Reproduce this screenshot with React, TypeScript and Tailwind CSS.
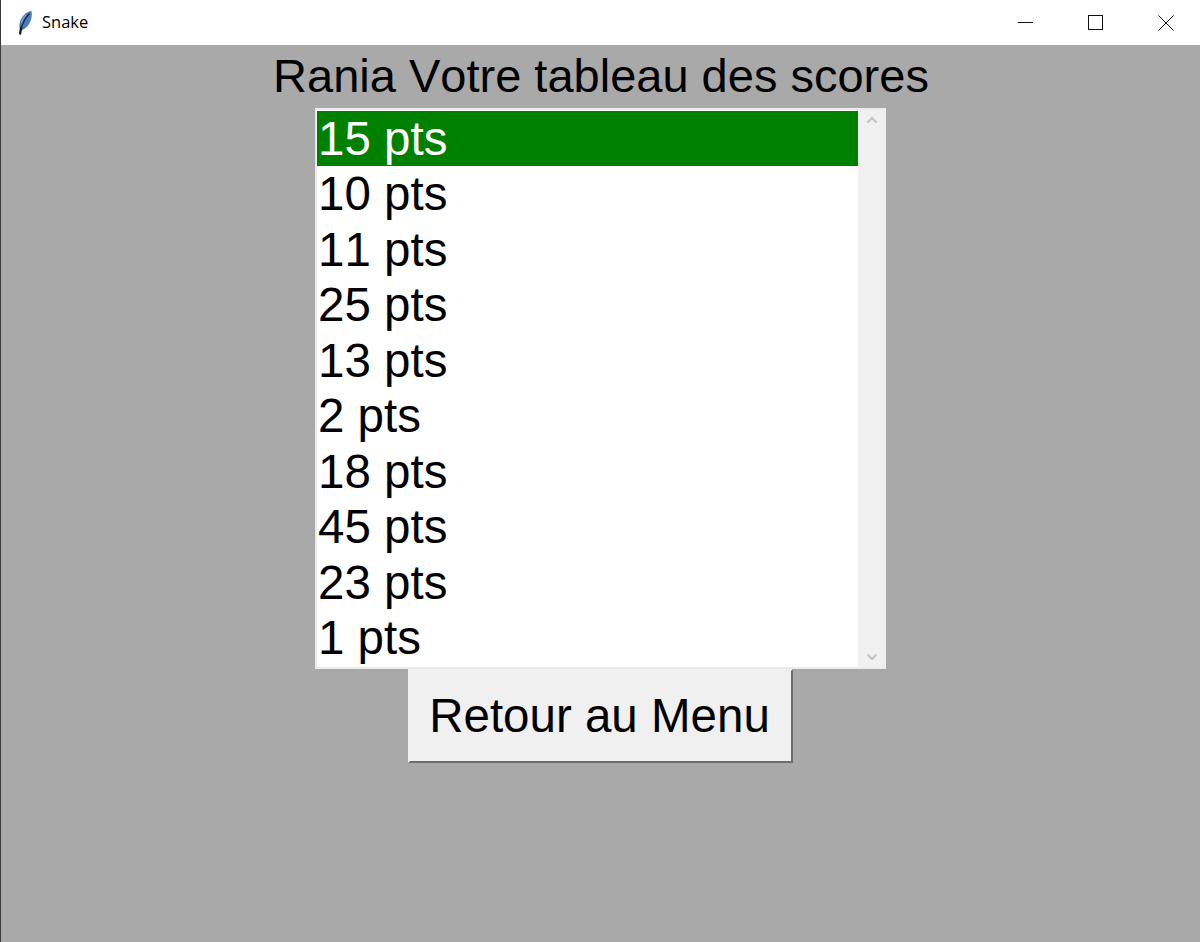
const scores = ["15 pts", "10 pts", "11 pts", "25 pts", "13 pts", "2 pts", "18 pts", "45 pts", "23 pts", "1 pts"];

function Feather() {
  return (
    <svg width="17" height="26" viewBox="0 0 17 26" className="ml-[16px]">
      <path d="M14.5 1 C10 1.5 5 5.5 3 11.5 C2 15 2.2 18 3.5 20.5 C8 19.5 11.5 16 13.5 11 C14.8 7.5 15.2 4 14.5 1 Z" fill="#4a7bb5" />
      <path d="M12.5 3.5 C8.5 7.5 5.5 13 3.8 20" fill="none" stroke="#16264a" strokeWidth="1.3" />
      <path d="M9 5 C6.5 7 5 10 4.5 13" fill="none" stroke="#9dbbdc" strokeWidth="0.8" />
      <path d="M4.2 17 L3 24.5" fill="none" stroke="#17171d" strokeWidth="2.2" />
    </svg>
  );
}

function TitleBar() {
  return (
    <div className="flex h-[45px] items-center bg-white">
      <Feather />
      <span className="ml-[8px] text-[16.5px] text-black font-['Open_Sans','Noto_Sans',sans-serif]">Snake</span>
      <div className="ml-auto flex h-full items-center">
        <div className="flex w-[70px] justify-center">
          <svg width="16" height="16" viewBox="0 0 16 16"><path d="M0 7.5 H15" stroke="#111" strokeWidth="1" /></svg>
        </div>
        <div className="flex w-[70px] justify-center">
          <svg width="16" height="16" viewBox="0 0 16 16"><rect x="0.5" y="0.5" width="14" height="14" fill="none" stroke="#111" strokeWidth="1" /></svg>
        </div>
        <div className="flex w-[69px] justify-center">
          <svg width="16" height="16" viewBox="0 0 16 16"><path d="M0.5 0.5 L15.5 15.5 M15.5 0.5 L0.5 15.5" stroke="#111" strokeWidth="1" /></svg>
        </div>
      </div>
    </div>
  );
}

function ScoreList() {
  return (
    <div className="flex h-[561px] w-[571px] border-2 border-[#ebebeb] border-r-0 bg-white">
      <div className="flex w-[541px] flex-col pt-px">
        {scores.map((score, i) => (
          <div
            key={i}
            className={`pl-px text-[47.5px] leading-[56px] [font-kerning:none] ${i === 0 ? "h-[55px] bg-[#008000] text-white" : "h-[55.55px] text-black"}`}
          >
            {score}
          </div>
        ))}
      </div>
      <div className="ml-auto flex w-[28px] flex-col items-center justify-between bg-[#f0f0f0] py-[6px]">
        <svg width="12" height="8" viewBox="0 0 12 8"><path d="M1.5 6.5 L6 2 L10.5 6.5" fill="none" stroke="#c4c4c4" strokeWidth="2" /></svg>
        <svg width="12" height="8" viewBox="0 0 12 8"><path d="M1.5 1.5 L6 6 L10.5 1.5" fill="none" stroke="#c4c4c4" strokeWidth="2" /></svg>
      </div>
    </div>
  );
}

export default function App() {
  return (
    <div className="flex h-[942px] w-[1200px] flex-col overflow-hidden border-l border-[#3a3a3a] bg-[#a9a9a9] font-['Liberation_Sans',Arial,sans-serif]">
      <TitleBar />
      <div className="flex flex-col items-center">
        <h1 className="mt-[5px] h-[58px] whitespace-nowrap pl-px text-center text-[47px] leading-[52px] text-black [font-kerning:none]">Rania Votre tableau des scores</h1>
        <ScoreList />
        <button className="h-[94px] w-[385px] border-2 border-[#f0f0f0] border-r-[#6e6e6e] border-b-[#6e6e6e] bg-[#f0f0f0] pr-[2px] text-center text-[47.5px] leading-[50px] text-black">
          Retour au Menu
        </button>
      </div>
    </div>
  );
}
